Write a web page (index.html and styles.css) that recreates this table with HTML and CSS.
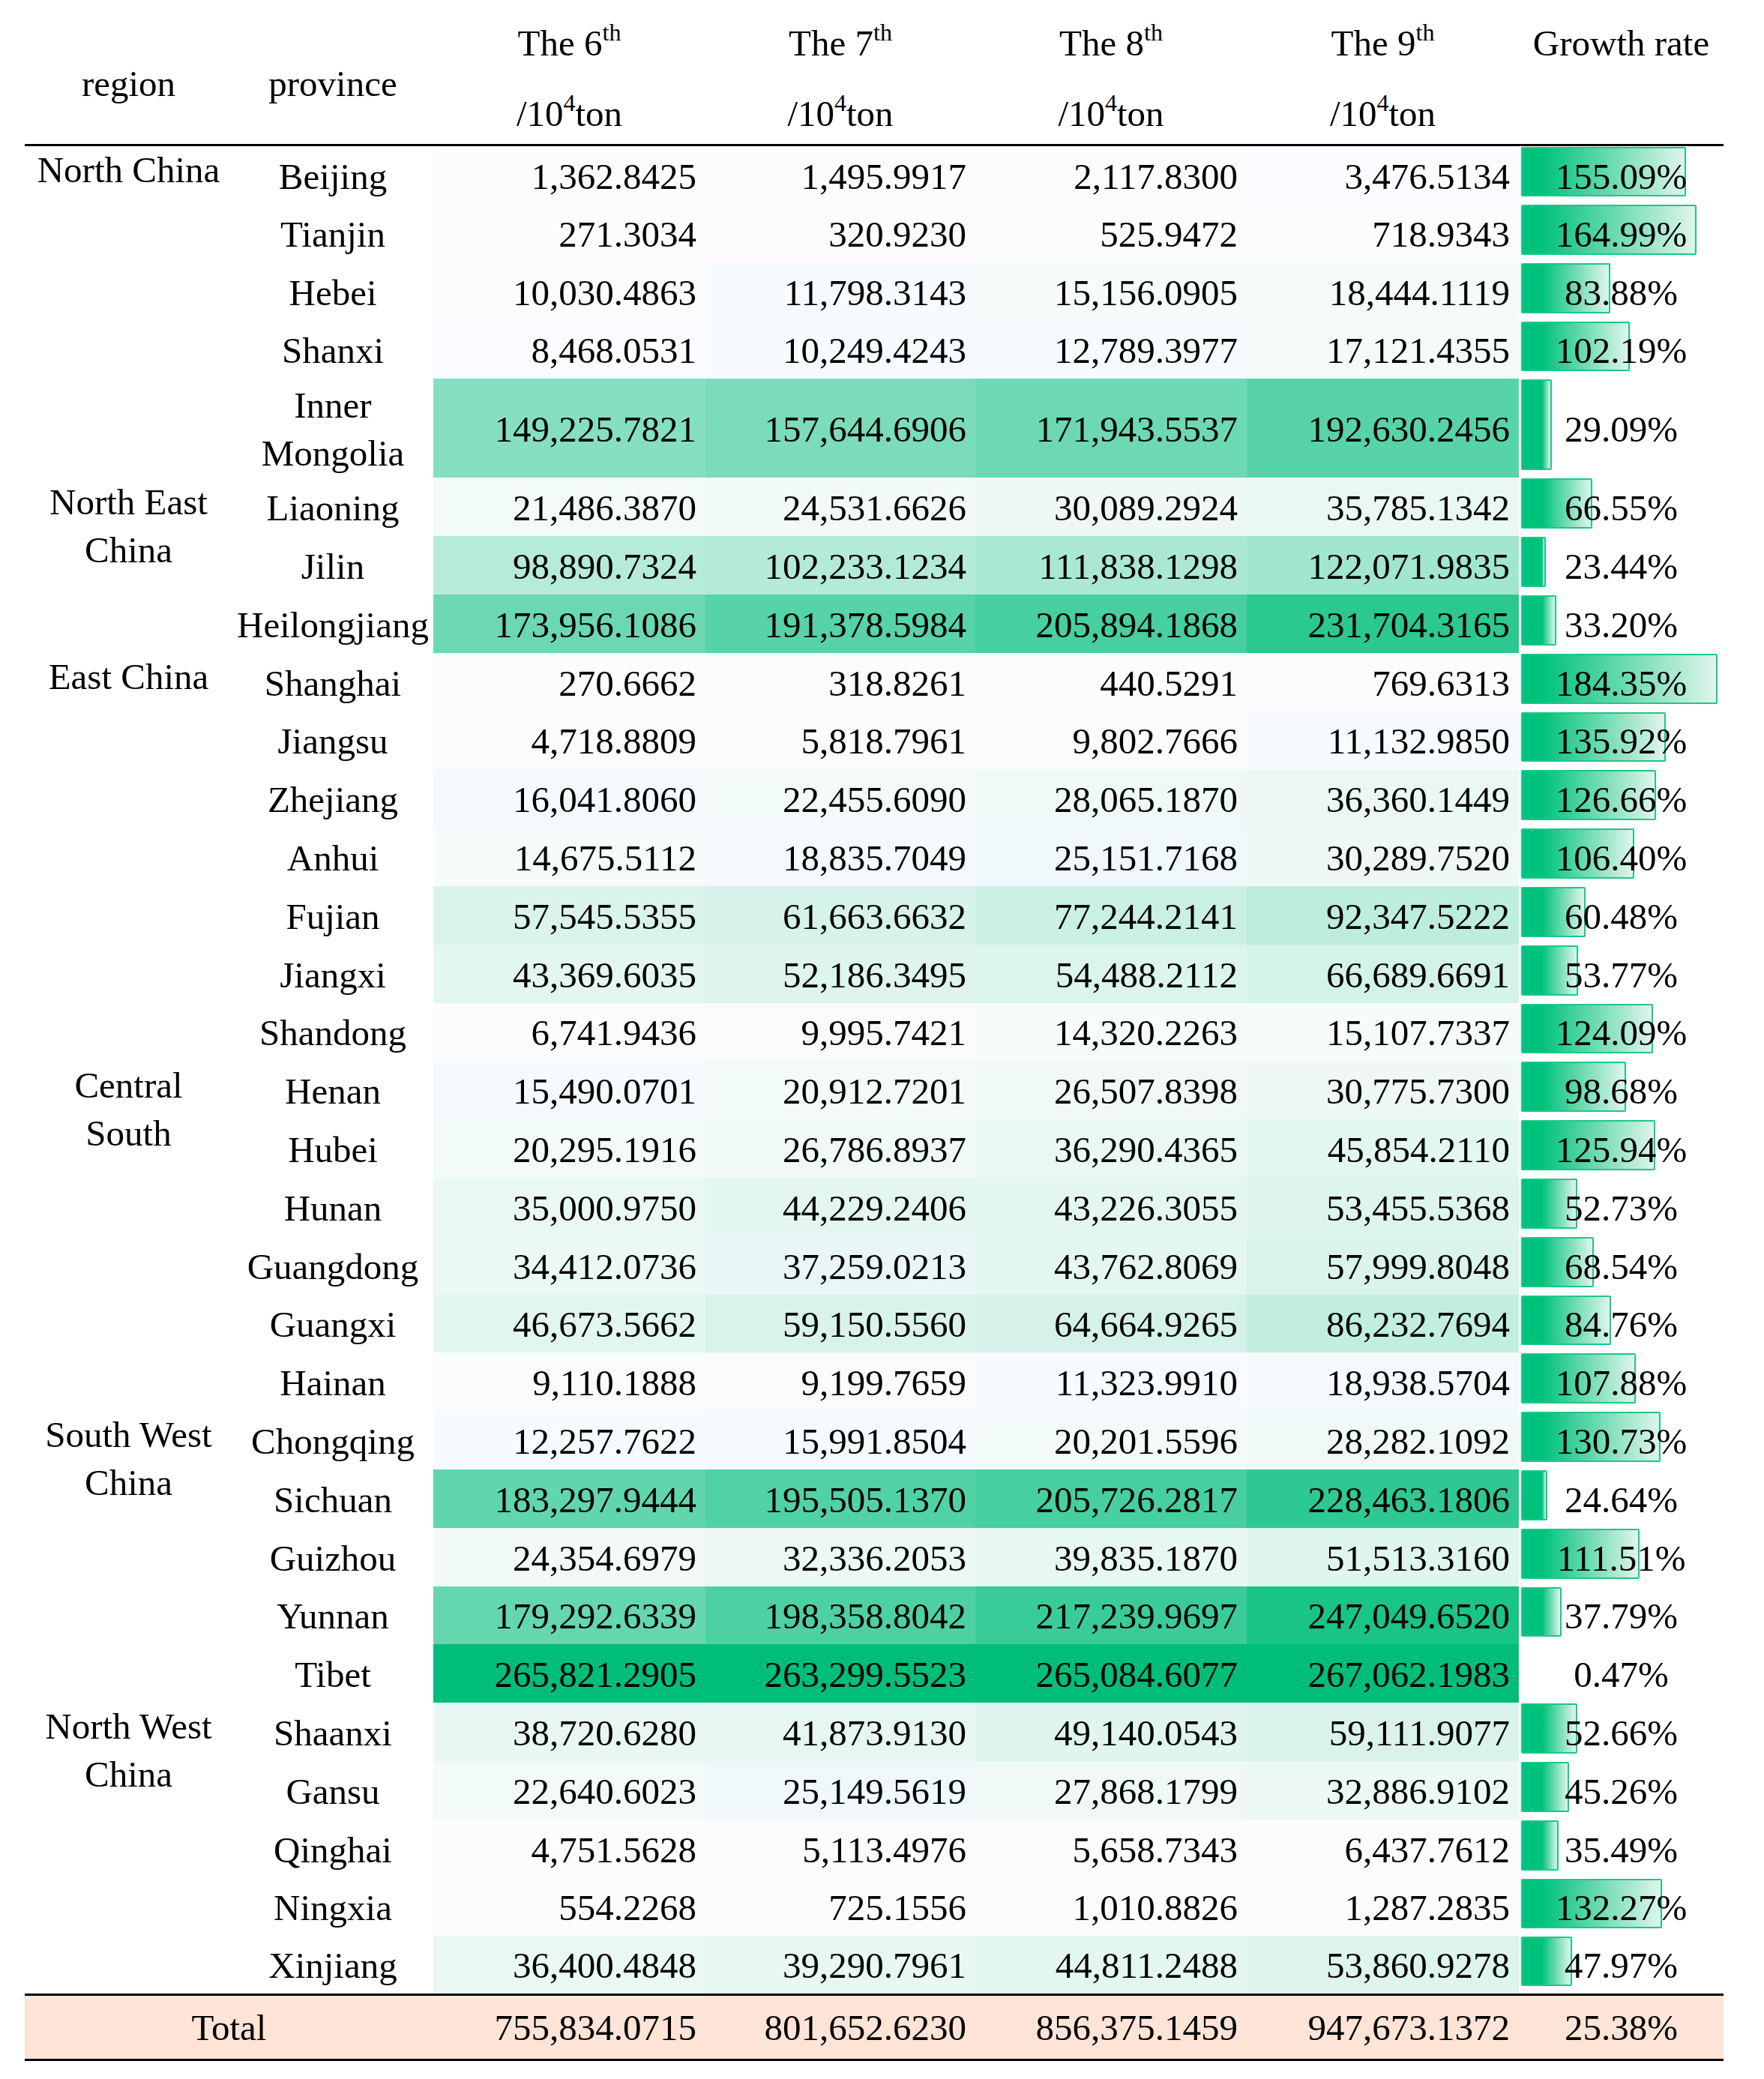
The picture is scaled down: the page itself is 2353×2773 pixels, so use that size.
FILE: index.html
```html
<!DOCTYPE html>
<html lang="en">
<head>
<meta charset="utf-8">
<title>Provincial totals by period</title>
<link rel="stylesheet" href="styles.css">
</head>
<body>
<table class="sheet">
  <colgroup>
    <col class="c-region"><col class="c-prov"><col class="c-num"><col class="c-num7"><col class="c-num8"><col class="c-num"><col class="c-growth">
  </colgroup>
  <thead>
    <tr>
      <th><div class="hmid">region</div></th>
      <th><div class="hmid">province</div></th>
      <th><div class="l1">The 6<sup>th</sup></div><div class="l2">/10<sup>4</sup>ton</div></th>
      <th><div class="l1">The 7<sup>th</sup></div><div class="l2">/10<sup>4</sup>ton</div></th>
      <th><div class="l1">The 8<sup>th</sup></div><div class="l2">/10<sup>4</sup>ton</div></th>
      <th><div class="l1">The 9<sup>th</sup></div><div class="l2">/10<sup>4</sup>ton</div></th>
      <th><div class="l1">Growth rate</div></th>
    </tr>
  </thead>
  <tbody>
    <tr class="data"><td class="region">North China</td><td class="prov">Beijing</td><td class="num">1,362.8425</td><td class="num">1,495.9917</td><td class="num">2,117.8300</td><td class="num">3,476.5134</td><td class="growth"><span class="gv">155.09%</span></td></tr>
    <tr class="data"><td class="region"></td><td class="prov">Tianjin</td><td class="num">271.3034</td><td class="num">320.9230</td><td class="num">525.9472</td><td class="num">718.9343</td><td class="growth"><span class="gv">164.99%</span></td></tr>
    <tr class="data"><td class="region"></td><td class="prov">Hebei</td><td class="num">10,030.4863</td><td class="num">11,798.3143</td><td class="num">15,156.0905</td><td class="num">18,444.1119</td><td class="growth"><span class="gv">83.88%</span></td></tr>
    <tr class="data"><td class="region"></td><td class="prov">Shanxi</td><td class="num">8,468.0531</td><td class="num">10,249.4243</td><td class="num">12,789.3977</td><td class="num">17,121.4355</td><td class="growth"><span class="gv">102.19%</span></td></tr>
    <tr class="data tall"><td class="region"></td><td class="prov">Inner<br>Mongolia</td><td class="num">149,225.7821</td><td class="num">157,644.6906</td><td class="num">171,943.5537</td><td class="num">192,630.2456</td><td class="growth"><span class="gv">29.09%</span></td></tr>
    <tr class="data"><td class="region two" rowspan="2">North East<br>China</td><td class="prov">Liaoning</td><td class="num">21,486.3870</td><td class="num">24,531.6626</td><td class="num">30,089.2924</td><td class="num">35,785.1342</td><td class="growth"><span class="gv">66.55%</span></td></tr>
    <tr class="data"><td class="prov">Jilin</td><td class="num">98,890.7324</td><td class="num">102,233.1234</td><td class="num">111,838.1298</td><td class="num">122,071.9835</td><td class="growth"><span class="gv">23.44%</span></td></tr>
    <tr class="data"><td class="region"></td><td class="prov">Heilongjiang</td><td class="num">173,956.1086</td><td class="num">191,378.5984</td><td class="num">205,894.1868</td><td class="num">231,704.3165</td><td class="growth"><span class="gv">33.20%</span></td></tr>
    <tr class="data"><td class="region">East China</td><td class="prov">Shanghai</td><td class="num">270.6662</td><td class="num">318.8261</td><td class="num">440.5291</td><td class="num">769.6313</td><td class="growth"><span class="gv">184.35%</span></td></tr>
    <tr class="data"><td class="region"></td><td class="prov">Jiangsu</td><td class="num">4,718.8809</td><td class="num">5,818.7961</td><td class="num">9,802.7666</td><td class="num">11,132.9850</td><td class="growth"><span class="gv">135.92%</span></td></tr>
    <tr class="data"><td class="region"></td><td class="prov">Zhejiang</td><td class="num">16,041.8060</td><td class="num">22,455.6090</td><td class="num">28,065.1870</td><td class="num">36,360.1449</td><td class="growth"><span class="gv">126.66%</span></td></tr>
    <tr class="data"><td class="region"></td><td class="prov">Anhui</td><td class="num">14,675.5112</td><td class="num">18,835.7049</td><td class="num">25,151.7168</td><td class="num">30,289.7520</td><td class="growth"><span class="gv">106.40%</span></td></tr>
    <tr class="data"><td class="region"></td><td class="prov">Fujian</td><td class="num">57,545.5355</td><td class="num">61,663.6632</td><td class="num">77,244.2141</td><td class="num">92,347.5222</td><td class="growth"><span class="gv">60.48%</span></td></tr>
    <tr class="data"><td class="region"></td><td class="prov">Jiangxi</td><td class="num">43,369.6035</td><td class="num">52,186.3495</td><td class="num">54,488.2112</td><td class="num">66,689.6691</td><td class="growth"><span class="gv">53.77%</span></td></tr>
    <tr class="data"><td class="region"></td><td class="prov">Shandong</td><td class="num">6,741.9436</td><td class="num">9,995.7421</td><td class="num">14,320.2263</td><td class="num">15,107.7337</td><td class="growth"><span class="gv">124.09%</span></td></tr>
    <tr class="data"><td class="region two" rowspan="2">Central<br>South</td><td class="prov">Henan</td><td class="num">15,490.0701</td><td class="num">20,912.7201</td><td class="num">26,507.8398</td><td class="num">30,775.7300</td><td class="growth"><span class="gv">98.68%</span></td></tr>
    <tr class="data"><td class="prov">Hubei</td><td class="num">20,295.1916</td><td class="num">26,786.8937</td><td class="num">36,290.4365</td><td class="num">45,854.2110</td><td class="growth"><span class="gv">125.94%</span></td></tr>
    <tr class="data"><td class="region"></td><td class="prov">Hunan</td><td class="num">35,000.9750</td><td class="num">44,229.2406</td><td class="num">43,226.3055</td><td class="num">53,455.5368</td><td class="growth"><span class="gv">52.73%</span></td></tr>
    <tr class="data"><td class="region"></td><td class="prov">Guangdong</td><td class="num">34,412.0736</td><td class="num">37,259.0213</td><td class="num">43,762.8069</td><td class="num">57,999.8048</td><td class="growth"><span class="gv">68.54%</span></td></tr>
    <tr class="data"><td class="region"></td><td class="prov">Guangxi</td><td class="num">46,673.5662</td><td class="num">59,150.5560</td><td class="num">64,664.9265</td><td class="num">86,232.7694</td><td class="growth"><span class="gv">84.76%</span></td></tr>
    <tr class="data"><td class="region"></td><td class="prov">Hainan</td><td class="num">9,110.1888</td><td class="num">9,199.7659</td><td class="num">11,323.9910</td><td class="num">18,938.5704</td><td class="growth"><span class="gv">107.88%</span></td></tr>
    <tr class="data"><td class="region two" rowspan="2">South West<br>China</td><td class="prov">Chongqing</td><td class="num">12,257.7622</td><td class="num">15,991.8504</td><td class="num">20,201.5596</td><td class="num">28,282.1092</td><td class="growth"><span class="gv">130.73%</span></td></tr>
    <tr class="data"><td class="prov">Sichuan</td><td class="num">183,297.9444</td><td class="num">195,505.1370</td><td class="num">205,726.2817</td><td class="num">228,463.1806</td><td class="growth"><span class="gv">24.64%</span></td></tr>
    <tr class="data"><td class="region"></td><td class="prov">Guizhou</td><td class="num">24,354.6979</td><td class="num">32,336.2053</td><td class="num">39,835.1870</td><td class="num">51,513.3160</td><td class="growth"><span class="gv">111.51%</span></td></tr>
    <tr class="data"><td class="region"></td><td class="prov">Yunnan</td><td class="num">179,292.6339</td><td class="num">198,358.8042</td><td class="num">217,239.9697</td><td class="num">247,049.6520</td><td class="growth"><span class="gv">37.79%</span></td></tr>
    <tr class="data"><td class="region"></td><td class="prov">Tibet</td><td class="num">265,821.2905</td><td class="num">263,299.5523</td><td class="num">265,084.6077</td><td class="num">267,062.1983</td><td class="growth"><span class="gv">0.47%</span></td></tr>
    <tr class="data"><td class="region two" rowspan="2">North West<br>China</td><td class="prov">Shaanxi</td><td class="num">38,720.6280</td><td class="num">41,873.9130</td><td class="num">49,140.0543</td><td class="num">59,111.9077</td><td class="growth"><span class="gv">52.66%</span></td></tr>
    <tr class="data"><td class="prov">Gansu</td><td class="num">22,640.6023</td><td class="num">25,149.5619</td><td class="num">27,868.1799</td><td class="num">32,886.9102</td><td class="growth"><span class="gv">45.26%</span></td></tr>
    <tr class="data"><td class="region"></td><td class="prov">Qinghai</td><td class="num">4,751.5628</td><td class="num">5,113.4976</td><td class="num">5,658.7343</td><td class="num">6,437.7612</td><td class="growth"><span class="gv">35.49%</span></td></tr>
    <tr class="data"><td class="region"></td><td class="prov">Ningxia</td><td class="num">554.2268</td><td class="num">725.1556</td><td class="num">1,010.8826</td><td class="num">1,287.2835</td><td class="growth"><span class="gv">132.27%</span></td></tr>
    <tr class="data"><td class="region"></td><td class="prov">Xinjiang</td><td class="num">36,400.4848</td><td class="num">39,290.7961</td><td class="num">44,811.2488</td><td class="num">53,860.9278</td><td class="growth"><span class="gv">47.97%</span></td></tr>
  </tbody>
  <tfoot>
    <tr class="total"><td colspan="2" class="tlabel">Total</td><td class="num">755,834.0715</td><td class="num">801,652.6230</td><td class="num">856,375.1459</td><td class="num">947,673.1372</td><td class="tgrowth">25.38%</td></tr>
  </tfoot>
</table>
<script src="script.js"></script>
</body>
</html>
```

FILE: styles.css
```css
html, body {
  margin: 0;
  padding: 0;
  background: #ffffff;
}

body {
  font-family: "Liberation Serif", "Times New Roman", serif;
  font-size: 49px;
  color: #000000;
}

.sheet {
  margin-left: 33px;
  width: 2266px;
  border-collapse: collapse;
  table-layout: fixed;
}

.c-region { width: 277px; }
.c-prov { width: 268px; }
.c-num { width: 363px; }
.c-num7 { width: 360px; }
.c-num8 { width: 362px; }
.c-growth { width: 273px; }

.sheet th {
  font-weight: normal;
  padding: 0 0 2px 0;
  vertical-align: top;
  text-align: center;
  height: 190px;
  border-bottom: 3px solid #000000;
}

.sheet sup {
  font-size: 32px;
  line-height: 0;
  vertical-align: 20px;
}

.l1 {
  padding-top: 10px;
  line-height: 95px;
  height: 95px;
}

.l2 {
  margin-top: 9px;
  line-height: 76px;
  height: 76px;
}

.hmid {
  padding-top: 64px;
  line-height: 95px;
}

.sheet tr.data {
  height: 77.8px;
}

.sheet tr.tall {
  height: 130px;
}

.sheet td {
  padding: 4px 0 0 0;
  line-height: 64px;
  vertical-align: middle;
  white-space: nowrap;
}

.sheet td.region {
  text-align: center;
  padding: 0 0 13px 0;
}

.sheet td.region.two {
  padding: 0 0 27px 0;
}

.prov {
  text-align: center;
}

.sheet td.num {
  text-align: right;
  padding-right: 12px;
}

.growth {
  position: relative;
  text-align: center;
}

.bar {
  position: absolute;
  left: 3px;
  top: 1px;
  bottom: 10px;
  box-sizing: border-box;
  border: 2px solid #1cc886;
  border-radius: 2px;
  background: linear-gradient(90deg, #00c27c 0px, #00c27c 26px, #dff5eb 100%);
}

.gv {
  position: relative;
}

.sheet tr.total {
  height: 87px;
}

.sheet .total td {
  background: #fde4d6;
  padding-top: 2px;
  border-top: 3px solid #000000;
  border-bottom: 3px solid #000000;
}

.tlabel {
  text-align: center;
}

.tgrowth {
  text-align: center;
}
```

FILE: script.js
```js
(function () {
  var rows = Array.prototype.slice.call(document.querySelectorAll('tbody tr.data'));
  var lo = [252, 252, 255];
  var hi = [0, 190, 121];
  for (var c = 0; c < 4; c++) {
    var cells = rows.map(function (r) { return r.querySelectorAll('td.num')[c]; });
    var vals = cells.map(function (td) { return parseFloat(td.textContent.replace(/,/g, '')); });
    var min = Math.min.apply(null, vals);
    var max = Math.max.apply(null, vals);
    cells.forEach(function (td, i) {
      var f = Math.pow((vals[i] - min) / (max - min), 1.3);
      var rgb = lo.map(function (l, k) { return Math.round(l + (hi[k] - l) * f); });
      td.style.backgroundColor = 'rgb(' + rgb.join(',') + ')';
    });
  }
  rows.forEach(function (r) {
    var td = r.querySelector('td.growth');
    var p = parseFloat(td.textContent);
    if (p >= 1) {
      var b = document.createElement('span');
      b.className = 'bar';
      b.style.width = (p * 1.42).toFixed(1) + 'px';
      td.insertBefore(b, td.firstChild);
    }
  });
})();
```
